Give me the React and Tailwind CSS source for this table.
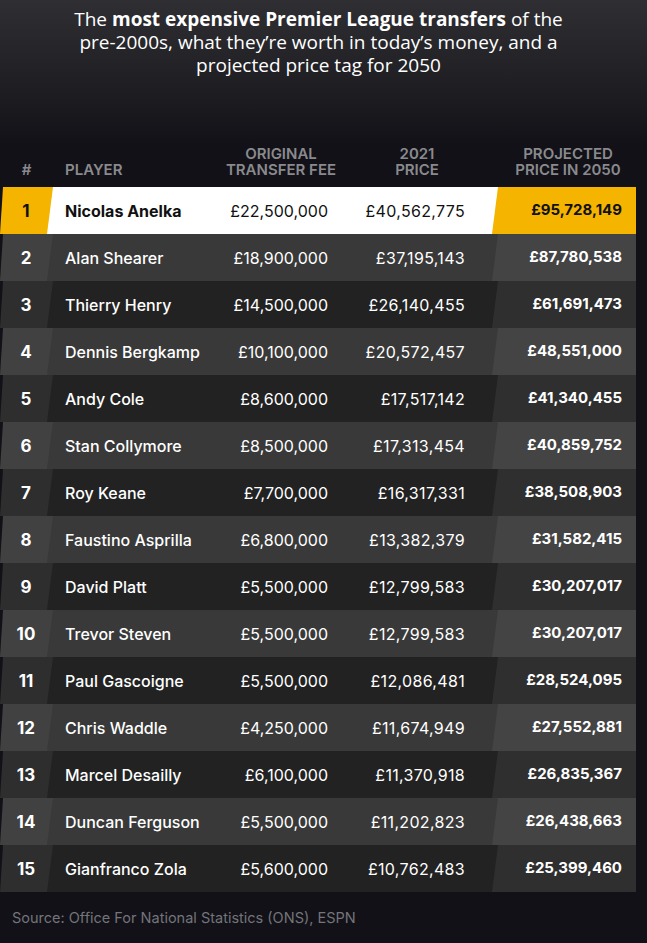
const rows = [
  [1, 'Nicolas Anelka', '£22,500,000', '£40,562,775', '£95,728,149'],
  [2, 'Alan Shearer', '£18,900,000', '£37,195,143', '£87,780,538'],
  [3, 'Thierry Henry', '£14,500,000', '£26,140,455', '£61,691,473'],
  [4, 'Dennis Bergkamp', '£10,100,000', '£20,572,457', '£48,551,000'],
  [5, 'Andy Cole', '£8,600,000', '£17,517,142', '£41,340,455'],
  [6, 'Stan Collymore', '£8,500,000', '£17,313,454', '£40,859,752'],
  [7, 'Roy Keane', '£7,700,000', '£16,317,331', '£38,508,903'],
  [8, 'Faustino Asprilla', '£6,800,000', '£13,382,379', '£31,582,415'],
  [9, 'David Platt', '£5,500,000', '£12,799,583', '£30,207,017'],
  [10, 'Trevor Steven', '£5,500,000', '£12,799,583', '£30,207,017'],
  [11, 'Paul Gascoigne', '£5,500,000', '£12,086,481', '£28,524,095'],
  [12, 'Chris Waddle', '£4,250,000', '£11,674,949', '£27,552,881'],
  [13, 'Marcel Desailly', '£6,100,000', '£11,370,918', '£26,835,367'],
  [14, 'Duncan Ferguson', '£5,500,000', '£11,202,823', '£26,438,663'],
  [15, 'Gianfranco Zola', '£5,600,000', '£10,762,483', '£25,399,460'],
];

const rankClip = { clipPath: 'polygon(3px 0, 53px 0, 47px 100%, 0 100%)' };
const projClip = { clipPath: 'polygon(8px 0, 100% 0, 100% 100%, 2px 100%)' };

function Row({ rank, name, fee, price, projected }) {
  const first = rank === 1;
  const even = rank % 2 === 0;
  const rankBg = first ? 'bg-[#f4b400]' : even ? 'bg-[#414141]' : 'bg-[#2e2e2e]';
  const midBg = first ? 'bg-white' : even ? 'bg-[#393939]' : 'bg-[#222222]';
  const projBg = first ? 'bg-[#f4b400]' : even ? 'bg-[#444444]' : 'bg-[#2f2f2f]';
  const text = first ? 'text-[#111111]' : 'text-white';

  return (
    <div className={`flex h-[47px] w-[636px] ${text}`}>
      <div
        className={`relative z-10 w-[53px] shrink-0 flex items-center justify-center pr-[1px] pt-[2px] text-[17px] font-bold ${rankBg}`}
        style={rankClip}
      >
        {rank}
      </div>
      <div className={`-ml-[8px] flex-1 flex items-center pl-[20px] text-[16px] ${midBg}`}>
        <span className={`w-[160px] ${first ? 'font-bold' : 'font-medium'}`}>{name}</span>
        <span className="w-[103px] text-right">{fee}</span>
        <span className="w-[137px] text-right tracking-[0.02em]">{price}</span>
      </div>
      <div
        className={`relative z-10 -ml-[8px] w-[146px] shrink-0 flex items-center justify-end pr-[14px] text-[15px] font-bold ${projBg}`}
        style={projClip}
      >
        {projected}
      </div>
    </div>
  );
}

export default function App() {
  return (
    <div className="w-[647px] min-h-[943px] bg-[#111117] font-['Inter',sans-serif]">
      {/* Title over faded stadium */}
      <div className="bg-[linear-gradient(to_bottom,#2e2e33_0%,#232327_45%,#111117_100%)] pt-[8px] pr-[10px] h-[146px]">
        <p className="font-['Open_Sans',sans-serif] text-[19px] leading-[23px] text-white text-center">
          The <b className="font-bold">most expensive Premier League transfers</b> of the
          <br />
          pre-2000s, what they’re worth in today’s money, and a
          <br />
          projected price tag for 2050
        </p>
      </div>

      {/* Header */}
      <div className="flex items-end h-[32px] mb-[9px] text-[15px] leading-[16px] font-semibold uppercase text-[#8a8a8e]">
        <div className="w-[53px] text-center">#</div>
        <div className="w-[150px] ml-[12px]">Player</div>
        <div className="w-[132px] text-center">Original<br />Transfer Fee</div>
        <div className="w-[140px] text-center">2021<br />Price</div>
        <div className="w-[136px] ml-[13px] text-center">Projected<br />Price in 2050</div>
      </div>

      {/* Rows */}
      <div className="flex flex-col">
        {rows.map(([rank, name, fee, price, projected]) => (
          <Row key={rank} rank={rank} name={name} fee={fee} price={price} projected={projected} />
        ))}
      </div>

      {/* Footer */}
      <p className="pt-[15px] pl-[12px] text-[14.5px] text-[#74747a]">
        Source: Office For National Statistics (ONS), ESPN
      </p>
    </div>
  );
}
